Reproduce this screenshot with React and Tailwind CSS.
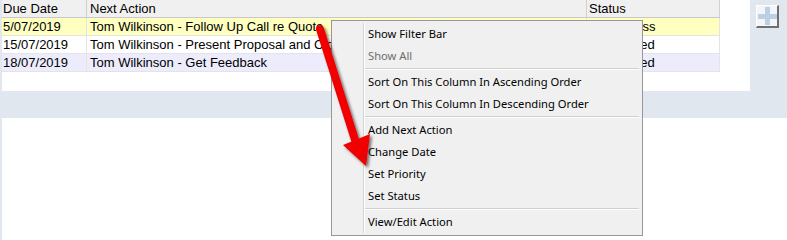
import React from 'react';

const columns = [
  { key: 'due', label: 'Due Date', width: 'w-[85px]', pad: 'pl-[1px]' },
  { key: 'action', label: 'Next Action', width: 'w-[500px]', pad: 'pl-[3px]' },
  { key: 'status', label: 'Status', width: 'w-[133px]', pad: 'pl-[2px]' }
];

const rows = [
  { due: '5/07/2019', action: 'Tom Wilkinson - Follow Up Call re Quote', status: 'In Progress', bg: 'bg-[#ffffc0]' },
  { due: '15/07/2019', action: 'Tom Wilkinson - Present Proposal and Close', status: 'Not Started', bg: 'bg-white' },
  { due: '18/07/2019', action: 'Tom Wilkinson - Get Feedback', status: 'Not Started', bg: 'bg-[#ececfd]' }
];

const menu = [
  { label: 'Show Filter Bar' },
  { label: 'Show All', disabled: true },
  'sep',
  { label: 'Sort On This Column In Ascending Order' },
  { label: 'Sort On This Column In Descending Order' },
  'sep',
  { label: 'Add Next Action' },
  { label: 'Change Date' },
  { label: 'Set Priority' },
  { label: 'Set Status' },
  'sep',
  { label: 'View/Edit Action' }
];

export default function App() {
  return (
    <div className="relative w-[787px] h-[240px] overflow-hidden bg-white font-['Liberation_Sans',Arial,sans-serif] text-[13px] text-black">
      <div className="flex h-[91px] bg-[#e0e7ef] pl-[2px]">
        <div className="w-[748px] bg-white">
          <ActionGrid />
        </div>
        <div className="flex-1 pt-[5px] pl-[6px]">
          <AddButton />
        </div>
      </div>
      <div className="h-[27px] bg-[#e0e7ef]" />
      <div className="h-[122px] border-l-2 border-[#e0e7ef] bg-white" />

      <ContextMenu />
      <RedArrow />
    </div>
  );
}

function ActionGrid() {
  return (
    <div className="w-[718px]">
      <div className="flex h-[18px] bg-[#f0f0f0] border-b border-[#c8c8c8]">
        {columns.map((col) => (
          <div
            key={col.key}
            className={`${col.width} ${col.pad} h-full leading-[17px] border-r border-[#d0d0d0]`}
          >
            {col.label}
          </div>
        ))}
      </div>
      {rows.map((row) => (
        <div key={row.due} className={`flex h-[18px] border-b border-[#e4e4e4] ${row.bg}`}>
          {columns.map((col) => (
            <div
              key={col.key}
              className={`${col.width} ${col.pad} h-full leading-[17px] border-r border-[#e4e4e4] whitespace-nowrap overflow-hidden`}
            >
              {row[col.key]}
            </div>
          ))}
        </div>
      ))}
    </div>
  );
}

function AddButton() {
  return (
    <div className="relative w-[23px] h-[23px] bg-[#f3f5f8] border-t border-l border-white border-r-2 border-b-2 border-r-[#6f6f6f] border-b-[#6f6f6f]">
      <div className="absolute left-[8px] top-[1px] w-[5px] h-[18px] bg-[#bcd0e2]" />
      <div className="absolute left-[1px] top-[8px] w-[19px] h-[5px] bg-[#bcd0e2]" />
    </div>
  );
}

function ContextMenu() {
  return (
    <div className="absolute left-[331px] top-[20px] w-[312px] h-[216px] bg-[#f0f0f0] border border-[#979797] p-[2px] font-['Noto_Sans',sans-serif] text-[11.2px] text-black flex">
      <div className="w-[29px] shrink-0" />
      <div className="flex-1 border-l border-[#d4d4d4] shadow-[inset_1px_0_0_#ffffff] flex flex-col">
        {menu.map((item, i) =>
          item === 'sep' ? (
            <div key={i} className="h-[4px] flex items-center pl-[1px] pr-[1px]">
              <div className="w-full h-[2px] border-t border-[#d0d0d0] border-b border-b-white" />
            </div>
          ) : (
            <div
              key={i}
              className={`h-[22px] leading-[22px] pl-[4px] whitespace-nowrap ${item.disabled ? 'text-[#6d6d6d]' : ''}`}
            >
              {item.label}
            </div>
          )
        )}
      </div>
    </div>
  );
}

function RedArrow() {
  return (
    <svg
      className="absolute left-0 top-0 pointer-events-none"
      width="787"
      height="240"
      viewBox="0 0 787 240"
    >
      <defs>
        <filter id="arrowShadow" x="-50%" y="-50%" width="200%" height="200%">
          <feDropShadow dx="2" dy="2" stdDeviation="1.5" floodColor="#000" floodOpacity="0.55" />
        </filter>
      </defs>
      <g filter="url(#arrowShadow)">
        <line x1="320" y1="29" x2="356" y2="143" stroke="#f00000" strokeWidth="8" strokeLinecap="round" />
        <polygon points="343,145 370,134 366,166" fill="#f00000" />
      </g>
    </svg>
  );
}
